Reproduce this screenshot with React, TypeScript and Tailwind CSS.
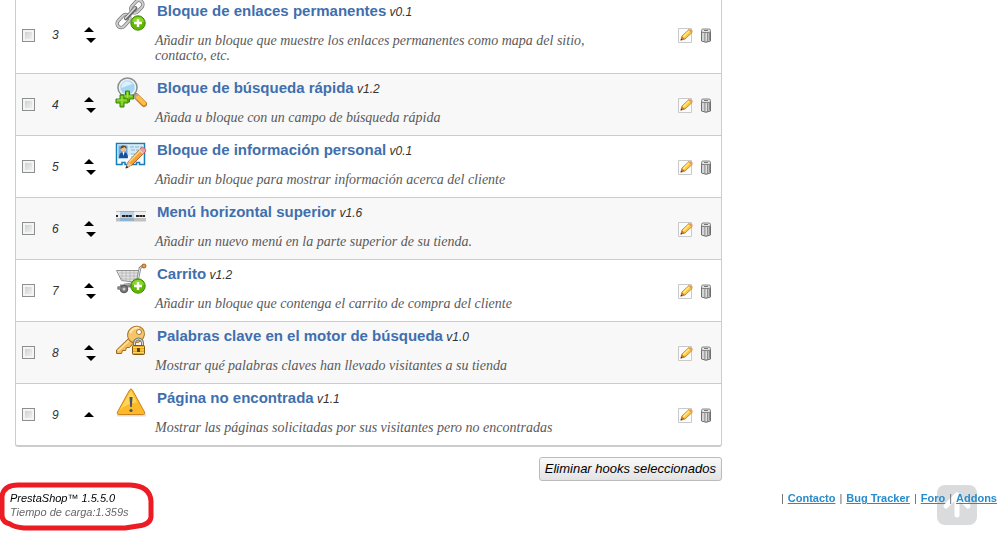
import { useState } from 'react';

type IconName = 'link' | 'search' | 'card' | 'menu' | 'cart' | 'key' | 'warning';

const hooks: { position: number; icon: IconName; name: string; version: string; description: string }[] = [
  { position: 3, icon: 'link', name: 'Bloque de enlaces permanentes', version: 'v0.1', description: 'Añadir un bloque que muestre los enlaces permanentes como mapa del sitio, contacto, etc.' },
  { position: 4, icon: 'search', name: 'Bloque de búsqueda rápida', version: 'v1.2', description: 'Añada u bloque con un campo de búsqueda rápida' },
  { position: 5, icon: 'card', name: 'Bloque de información personal', version: 'v0.1', description: 'Añadir un bloque para mostrar información acerca del cliente' },
  { position: 6, icon: 'menu', name: 'Menú horizontal superior', version: 'v1.6', description: 'Añadir un nuevo menú en la parte superior de su tienda.' },
  { position: 7, icon: 'cart', name: 'Carrito', version: 'v1.2', description: 'Añadir un bloque que contenga el carrito de compra del cliente' },
  { position: 8, icon: 'key', name: 'Palabras clave en el motor de búsqueda', version: 'v1.0', description: 'Mostrar qué palabras claves han llevado visitantes a su tienda' },
  { position: 9, icon: 'warning', name: 'Página no encontrada', version: 'v1.1', description: 'Mostrar las páginas solicitadas por sus visitantes pero no encontradas' },
];

const links = ['Contacto', 'Bug Tracker', 'Foro', 'Addons'];

function PlusBadge() {
  return (
    <g>
      <circle cx="23" cy="23" r="7.2" fill="#62b800" stroke="#3d8a08" />
      <path d="M17 21.500a6.300 6.300 0 0 1 12 0q-6 2.500-12 0z" fill="#8bd52a" />
      <path d="M23 19v8M19 23h8" stroke="#fff" strokeWidth="2.400" />
    </g>
  );
}

function ModuleIcon({ name }: { name: IconName }) {
  return (
    <svg viewBox="0 0 32 32" className="block size-8" aria-hidden="true">
      {name === 'link' && (
        <>
          <g transform="rotate(-47 15 14)" fill="none">
            <rect x="-2" y="10" width="15" height="8" rx="4" stroke="#777" strokeWidth="3.400" />
            <rect x="-2" y="10" width="15" height="8" rx="4" stroke="#cfcfcf" strokeWidth="2" />
            <rect x="18" y="10" width="14" height="8" rx="4" stroke="#777" strokeWidth="3.400" />
            <rect x="18" y="10" width="14" height="8" rx="4" stroke="#cfcfcf" strokeWidth="2" />
            <path d="M9 14h14" stroke="#666" strokeWidth="4" strokeLinecap="round" />
            <path d="M9 13.500h14" stroke="#ddd" strokeWidth="1.600" strokeLinecap="round" />
          </g>
          <PlusBadge />
        </>
      )}
      {name === 'search' && (
        <>
          <path d="M21 19l8 8" stroke="#b9762a" strokeWidth="6" strokeLinecap="round" />
          <path d="M20 18l3 3" stroke="#aaa" strokeWidth="5" />
          <path d="M23 20.500l6 6" stroke="#ffbd45" strokeWidth="4" strokeLinecap="round" />
          <circle cx="12.500" cy="10.500" r="9" fill="#a5d5f5" stroke="#8a8d90" strokeWidth="2.600" />
          <circle cx="12.500" cy="10.500" r="8" fill="none" stroke="#eef3f6" strokeWidth="1.600" />
          <path d="M6.500 11a6 6 0 0 1 11-4q-4 1-11 4z" fill="#daf0fd" />
          <path d="M10.500 14h4v4h4v4h-4v3h-4v-3h-4v-4h4z" fill="#6fc412" stroke="#38830a" />
          <path d="M5 18h4v4h4v4H9v4H5v-4H1v-4h4z" fill="#6fc412" stroke="#38830a" />
          <path d="M12.500 15v6M9 19h8M7 19v9M2 23h10" stroke="#a5e449" />
        </>
      )}
      {name === 'card' && (
        <>
          <path d="M1.500 4.500h28v21h-5v-2h-3v2H10v-2H7v2H1.500z" fill="#f5fbfe" stroke="#187db8" strokeWidth="1.500" />
          <path d="M3 6h25v6L3 20z" fill="#d2eafa" />
          <path d="M15 8h12M16 11h10M16 15h9M16 18h7" stroke="#86b5cf" strokeDasharray="4 1" />
          <path d="M3.500 6.500h9v13h-9z" fill="#69abe0" />
          <path d="M4 19q0-6 4.500-6t4.500 6z" fill="#1c4f96" />
          <path d="M7.500 13h2l-1 4z" fill="#fff" />
          <circle cx="8.500" cy="10" r="2.800" fill="#f2c18e" />
          <path d="M5.500 10q0-4 3-3.500 3.500 0 3 3.500l-2-2z" fill="#744017" />
          <path d="M11 29l2-6L26 9l4 4-13 13z" fill="#f7a033" stroke="#995013" strokeWidth=".8" />
          <path d="M14 23L26 11" stroke="#ffd884" strokeWidth="1.500" />
          <path d="M24 11l4 4 3-3q0-3-4-4z" fill="#ed9c9b" stroke="#b35d5d" strokeWidth=".7" />
          <path d="M24 10.500l4 4" stroke="#d8d8d8" strokeWidth="1.500" />
          <path d="M11 29l2-6 4 3z" fill="#eac696" />
          <path d="M10.500 29.500l1-3 2 2z" fill="#333" />
        </>
      )}
      {name === 'menu' && (
        <>
          <path d="M1 10h30v10H1z" fill="#c2c2c2" />
          <path d="M1 11h30v6H1z" fill="#f1f1f1" />
          <path d="M5 10h14v10H5z" fill="#91b3cd" />
          <path d="M5 11h14v6H5z" fill="#bed4e4" />
          <path d="M1 15h2M7 15h10M21 15h9" stroke="#222" strokeWidth="2" strokeDasharray="3 .4" />
          <path d="M1 20.500h30" stroke="#ddd" />
        </>
      )}
      {name === 'cart' && (
        <>
          <path d="M1.500 7.500h22l-1 12-16-2z" fill="#e4e4e4" stroke="#909090" />
          <path d="M4 10h19M5 13h17M6 16h16M7 8v10M11 8v10M15 8v10M19 8v10" stroke="#b4b4b4" strokeWidth=".8" />
          <path d="M29 2l-4 3-3 15-13 2" fill="none" stroke="#868686" strokeWidth="2.600" />
          <path d="M29 2l-4 3-3 15-13 2" fill="none" stroke="#e3e3e3" />
          <circle cx="29" cy="3" r="2" fill="#e8a04c" stroke="#a86317" />
          <path d="M5 23h14" stroke="#888" strokeWidth="3" />
          <circle cx="9" cy="26" r="3.800" fill="#777" stroke="#555" />
          <circle cx="9" cy="26" r="1.500" fill="#ccc" />
          <circle cx="4" cy="25" r="2" fill="#888" />
          <PlusBadge />
        </>
      )}
      {name === 'key' && (
        <>
          <path d="M15 12L1.500 25v3.500h5l1-3h3l1-3h3l4.500-5" fill="#f4bd57" stroke="#9d6921" />
          <path d="M3 26l13-12" stroke="#ffe2a0" strokeWidth="1.500" />
          <ellipse cx="21" cy="9.500" rx="8.800" ry="8" fill="#f5c56a" stroke="#a77526" transform="rotate(-40 21 9.500)" />
          <path d="M15 8q3-6 9-5" fill="none" stroke="#ffe9b3" strokeWidth="2" />
          <circle cx="24" cy="7" r="2.500" fill="#fff" stroke="#a77526" />
          <path d="M19.500 21v-3a4 4 0 0 1 8 0v3" fill="none" stroke="#777" strokeWidth="3" />
          <path d="M19.500 21v-3a4 4 0 0 1 8 0v3" fill="none" stroke="#ddd" />
          <rect x="17.500" y="20.500" width="12" height="9" rx="1" fill="#e8a91f" stroke="#84570d" />
          <path d="M18 22.500h11M18 25h11M18 27.500h11" stroke="#ffd963" />
          <path d="M22 23h3v4h-3z" fill="#684214" />
        </>
      )}
      {name === 'warning' && (
        <>
          <path d="M2 28.500h29" stroke="#ddd" strokeWidth="2" />
          <path d="M16 2q1 0 2 2l11.500 21q1 2.500-1 2.500h-25q-2 0-1-2.500L14 4q1-2 2-2z" fill="#fdb927" stroke="#c98420" />
          <path d="M16 3.500l6 12q-10 1-17 7z" fill="#ffd65c" />
          <path d="M14.500 10h3l-.7 10h-1.600z" fill="#4c5364" />
          <circle cx="16" cy="23.500" r="1.600" fill="#4c5364" />
        </>
      )}
    </svg>
  );
}

function EditIcon() {
  return (
    <svg viewBox="0 0 16 16" className="block size-4" aria-hidden="true">
      <path d="M1.500 1.500h13v14h-13z" fill="#fcfcfc" stroke="#c9c9c9" />
      <path d="M4 13l1-4 7-6.500 3 3L8 12z" fill="#ffc83b" stroke="#b27220" strokeWidth=".8" />
      <path d="M6 10l6-6" stroke="#fff0a0" strokeWidth="1.200" />
      <path d="M11.500 3l3 3 1.500-2-2.500-2z" fill="#e99b64" />
      <path d="M3.500 13.500l1.500-4.200 2.800 2.700z" fill="#c77936" />
      <path d="M3.500 13.500l.8-2 1.200 1.200z" fill="#333" />
    </svg>
  );
}

function TrashIcon() {
  return (
    <svg viewBox="0 0 16 16" className="block size-4" aria-hidden="true">
      <path d="M3.500 4v10q4.500 2.500 9 0V4z" fill="#bdbdbd" stroke="#6e6e6e" />
      <path d="M7 6v8M9.500 6v8M11.500 6v7" stroke="#828282" strokeWidth=".8" />
      <path d="M5 6v8M8.200 6v8" stroke="#eee" />
      <rect x="3.500" y="2" width="9" height="3.500" rx="1.500" fill="#e4e4e4" stroke="#858585" />
      <path d="M6 3.500h4" stroke="#777" />
    </svg>
  );
}

export default function App() {
  const [selected, setSelected] = useState<number[]>([]);

  const toggle = (position: number) => {
    setSelected(selected.includes(position) ? selected.filter((p) => p !== position) : [...selected, position]);
  };

  return (
    <div className="min-h-screen overflow-hidden bg-white font-['Liberation_Sans',Arial,sans-serif] text-xs text-black">
      <main className="-mt-1 w-full max-w-[722px] pl-[15px]">
        {/* Module list */}
        <div className="overflow-hidden rounded-b-[3px] border border-b-2 border-[#ccc]">
          <table className="w-full border-collapse">
            <tbody>
              {hooks.map((hook, i) => (
                <tr key={hook.position} className="border-b border-[#ccc] last:border-b-0 even:bg-[#f8f8f8]">
                  <td className="w-8 pl-[6px]">
                    <input
                      type="checkbox"
                      aria-label={hook.name}
                      checked={selected.includes(hook.position)}
                      onChange={() => toggle(hook.position)}
                      className="block size-[13px] appearance-none border border-[#8e8f8f] bg-linear-to-br from-[#c5c9cd] to-[#f8f8f8] shadow-[inset_0_0_0_2px_#f4f4f4] checked:bg-[#3f6fae]"
                    />
                  </td>
                  <td className="w-9 pl-1 italic text-[#333]">{hook.position}</td>
                  <td className="w-[31px]">
                    <div className="flex w-3 flex-col gap-[6px]">
                      <button type="button" aria-label="Subir" className="block">
                        <svg viewBox="0 0 12 5" className="block h-[5px] w-3"><path d="M0 5L5 0l5 5z" /></svg>
                      </button>
                      {i < hooks.length - 1 && (
                        <button type="button" aria-label="Bajar" className="block">
                          <svg viewBox="0 0 12 5" className="block h-[5px] w-3"><path d="M2 0h10L7 5z" /></svg>
                        </button>
                      )}
                    </div>
                  </td>
                  <td className="w-10 pt-[3px] align-top">
                    <ModuleIcon name={hook.icon} />
                  </td>
                  <td className="pt-[5px] pr-20 pb-[10px] align-top">
                    <h3 className="pl-[2px] leading-[18px]">
                      <span className="text-[15px] font-bold text-[#3f6fae]">{hook.name}</span>{' '}
                      <span className="italic text-[#333]">{hook.version}</span>
                    </h3>
                    <p className="pt-3 font-['Liberation_Serif',Georgia,serif] text-sm leading-[15px] text-[#5a5a5a] italic">
                      {hook.description}
                    </p>
                  </td>
                  <td className="w-11">
                    <div className="flex gap-[5px]">
                      <button type="button" aria-label="Editar"><EditIcon /></button>
                      <button type="button" aria-label="Eliminar"><TrashIcon /></button>
                    </div>
                  </td>
                </tr>
              ))}
            </tbody>
          </table>
        </div>
        <div className="mt-[10px] flex justify-end">
          <button
            type="button"
            className="h-6 rounded-[3px] border border-[#bbb] bg-linear-to-b from-[#f9f9f9] to-[#e3e3e3] px-[5px] text-[13px] italic"
          >
            Eliminar hooks seleccionados
          </button>
        </div>
      </main>

      {/* Footer */}
      <footer className="relative z-10 flex items-start justify-between pr-[3px] text-[11px]">
        <div className="relative h-[50px] w-[154px] pt-[10px] pl-[10px] leading-[14px] italic">
          <svg viewBox="0 0 154 50" className="absolute inset-0 size-full" fill="none" aria-hidden="true">
            <path
              d="M18 4H130Q150 5 151 20V36Q150 44 138 45L125 47H24Q14 46 10 43Q2 41 2 34V15Q4 4 18 4z"
              stroke="#ed1c24"
              strokeWidth="5"
            />
          </svg>
          <p>PrestaShop™ 1.5.5.0</p>
          <p className="text-[#666]">Tiempo de carga:1.359s</p>
        </div>
        <nav className="flex gap-1 pt-[10px] leading-[14px] text-[#666]">
          {links.map((link) => (
            <span key={link} className="flex gap-1">
              <span>|</span>
              <a href="#" className="font-bold text-[#268ccd] underline">{link}</a>
            </span>
          ))}
        </nav>
      </footer>

      <button
        type="button"
        aria-label="Volver arriba"
        className="fixed right-[23px] bottom-[19px] size-10 rounded-lg bg-[#6b7075]/25"
      >
        <svg viewBox="0 0 40 40" className="block size-10" aria-hidden="true">
          <path d="M20 30V11M9 21L20 10l11 11" fill="none" stroke="#fff" strokeWidth="5" strokeLinecap="round" strokeLinejoin="round" />
        </svg>
      </button>
    </div>
  );
}
